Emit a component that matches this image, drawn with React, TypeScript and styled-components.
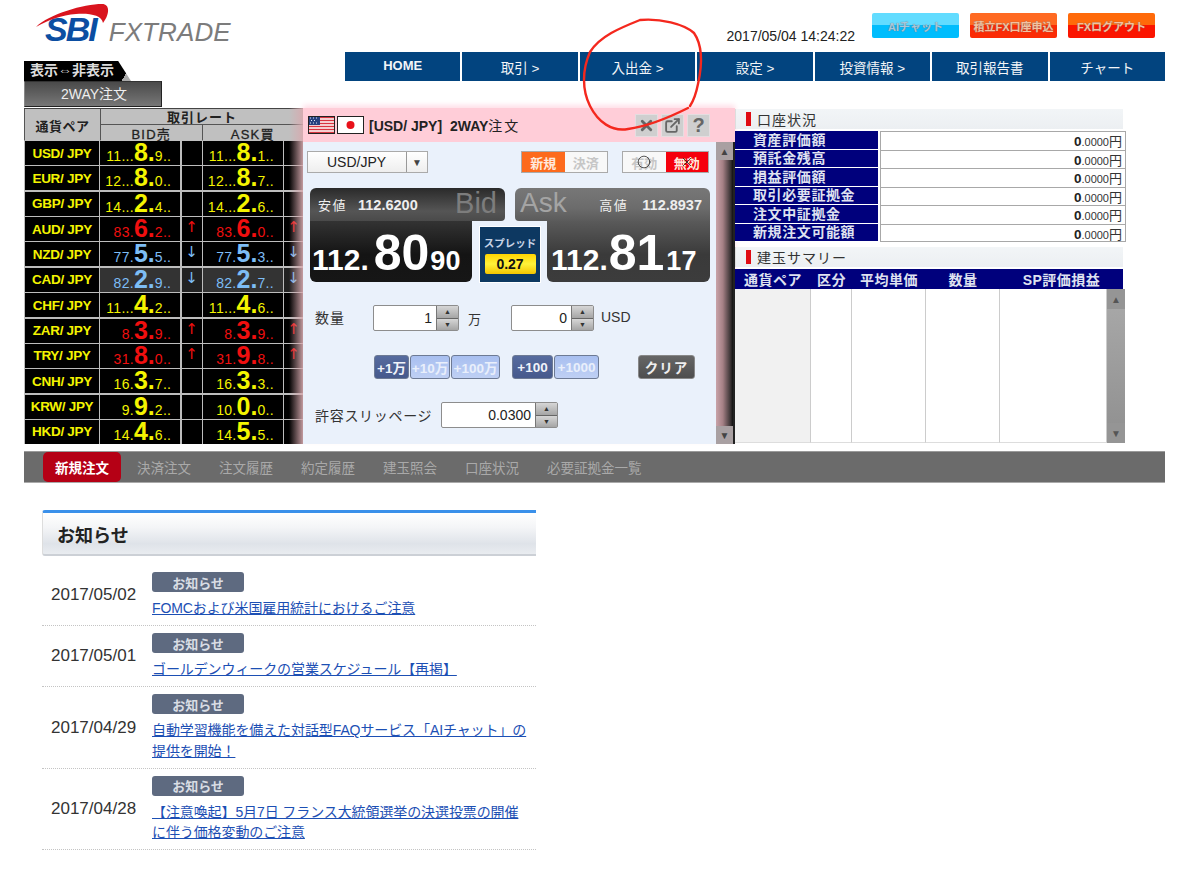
import { FC, Fragment } from "react";
import styled, { createGlobalStyle } from "styled-components";
import { Circle, ExternalLink, X } from "lucide-react";

const GlobalStyle = createGlobalStyle`
    html, body {
        margin:0;
        padding:0;
        background:#fff;
    }
    body {
        font-family:"Liberation Sans", "Noto Sans CJK JP", sans-serif;
        color:#222;
    }
    * {
        box-sizing:border-box;
    }
`

const Page = styled.div`
    position:relative;
    width:1200px;
    height:878px;
    padding:0 35px 0 24px;
    overflow:hidden;
`

/* ---------- header ---------- */

const TopBar = styled.div`
    display:flex;
    height:52px;
`

const Logo = styled.div`
    position:relative;
    display:flex;
    align-items:baseline;
    margin-left:21px;
    padding-top:11px;
    height:52px;
`

const Swoosh = styled.svg`
    position:absolute;
    left:-11px;
    top:0;
`

const LogoMark = styled.span`
    font-size:34px;
    line-height:36px;
    font-weight:bold;
    font-style:italic;
    letter-spacing:-2px;
    color:#0b4ea2;
`

const LogoName = styled.span`
    margin-left:13px;
    font-size:26px;
    font-style:italic;
    letter-spacing:0.1px;
    color:#7c7c7c;
`

const TopRight = styled.div`
    display:flex;
    align-items:flex-start;
    margin-left:auto;
    margin-right:10px;
    padding-top:13px;
`

const Clock = styled.div`
    font-size:14px;
    line-height:16px;
    margin:15px 6px 0 0;
    color:#222;
`

interface TopButtonProps {
    $tone:"cyan" | "orange" | "red";
}
const topTones = {
    cyan:"linear-gradient(#62dcff 0 50%, #00bdfd 50%)",
    orange:"linear-gradient(#ff6a22 0 50%, #fb2b05 50%)",
    red:"linear-gradient(#ff6a0a 0 50%, #fb1500 50%)",
};
const TopButton = styled.div<TopButtonProps>`
    width:87px;
    height:25px;
    margin-left:11px;
    display:flex;
    align-items:center;
    justify-content:center;
    border-radius:2px;
    font-size:11px;
    font-weight:bold;
    white-space:nowrap;
    color:${(props)=>props.$tone==="cyan" ? "#a9c7dc" : "#f4c1a0"};
    text-shadow:0 0 1px #666;
    background:${(props)=>topTones[props.$tone]};
`

const NavRow = styled.div`
    display:flex;
    justify-content:space-between;
    height:56px;
`

const LeftTabs = styled.div`
    display:flex;
    flex-direction:column;
    padding-top:9px;
`

const ToggleTab = styled.div`
    width:107px;
    height:20px;
    padding-left:6px;
    font-size:14px;
    line-height:19px;
    font-weight:bold;
    color:#ddd;
    white-space:nowrap;
    background:linear-gradient(120deg, #000 0 92%, #aaa 92%);
    clip-path:polygon(0 0, 88% 0, 100% 100%, 0 100%);
`

const WayTab = styled.div`
    width:138px;
    height:26px;
    font-size:14px;
    line-height:25px;
    padding-left:36px;
    color:#eee;
    background:linear-gradient(#4a4a4a, #777);
    border:1px solid #222;
    border-left-color:#888;
    border-top-color:#333;
`

const Nav = styled.div`
    display:flex;
    gap:2px;
    width:820px;
    height:29px;
`

const NavItem = styled.div`
    flex:1;
    display:flex;
    align-items:center;
    justify-content:center;
    padding-top:1px;
    font-size:13.5px;
    color:#f2f5f8;
    background:#02447f;
`

const HomeItem = styled(NavItem)`
    font-size:13px;
    font-weight:bold;
    padding-bottom:3px;
`

const Scribble = styled.svg`
    position:absolute;
    left:0;
    top:0;
    pointer-events:none;
`

/* ---------- rate table ---------- */

const Main = styled.div`
    display:flex;
    height:336px;
`

const RateColumn = styled.div`
    position:relative;
    width:279px;
    flex:none;
    display:flex;
    flex-direction:column;
`

const RateHead = styled.div`
    display:grid;
    grid-template-columns:75px 1fr 1fr;
    grid-template-rows:15px 16px;
    height:33px;
    flex:none;
    gap:1px;
    background:#555;
    border-top:1px solid #444;
    border-bottom:1px solid #999;
    padding-left:1px;
`

const HeadCell = styled.div`
    display:flex;
    align-items:center;
    justify-content:center;
    background:#c0c0c0;
    color:#222;
    font-weight:bold;
    font-size:13px;
    letter-spacing:0.5px;
    white-space:nowrap;
`

const PairHead = styled(HeadCell)`
    grid-row:1 / span 2;
`

const RateTitle = styled(HeadCell)`
    grid-column:2 / span 2;
    letter-spacing:1px;
`

const SideHead = styled(HeadCell)`
    font-weight:normal;
    -webkit-text-stroke:0.3px #222;
    letter-spacing:1.2px;
`

const RateBody = styled.div`
    flex:1;
    min-height:0;
    display:grid;
    grid-template-columns:74px 80px 20px 80px 1fr;
    grid-template-rows:repeat(12, minmax(0, 1fr));
    gap:1.3px;
    background:#bdbdbd;
    padding-left:1px;
`

const PairCell = styled.div`
    display:flex;
    align-items:center;
    justify-content:center;
    background:#000;
    color:#f4f400;
    font-weight:bold;
    font-size:13.5px;
    letter-spacing:-0.3px;
    white-space:pre;
`

const rateColors = {
    yellow:"#f4f400",
    red:"#f00f0f",
    blue:"#7dbdf5",
};
type RateTone = keyof typeof rateColors;

interface PriceCellProps {
    $tone:RateTone;
    $lit?:boolean;
}
const PriceCell = styled.div<PriceCellProps>`
    display:flex;
    align-items:baseline;
    justify-content:flex-end;
    padding-right:9px;
    line-height:23px;
    color:${(props)=>rateColors[props.$tone]};
    background:${(props)=>props.$lit ? "#333" : "#000"};
`

const SmallDigit = styled.span`
    font-size:14px;
    letter-spacing:0.3px;
`

const BigDigit = styled.span`
    font-size:25px;
    font-weight:bold;
`

const ArrowCell = styled.div<PriceCellProps>`
    display:flex;
    justify-content:center;
    font-family:"DejaVu Sans", sans-serif;
    font-size:15px;
    line-height:20px;
    color:${(props)=>rateColors[props.$tone]};
    background:${(props)=>props.$lit ? "#222" : "#000"};
`

const RateShade = styled.div`
    position:absolute;
    right:0;
    top:0;
    bottom:0;
    width:14px;
    background:linear-gradient(90deg, rgba(60,40,40,0), rgba(215,170,175,0.9));
`

/* ---------- order dialog ---------- */

const Dialog = styled.div`
    width:432px;
    flex:none;
    display:flex;
    flex-direction:column;
    background:#eaf1fb;
    box-shadow:0 -3px 5px #ffdfe8;
`

const DialogTitle = styled.div`
    height:34px;
    flex:none;
    display:flex;
    align-items:center;
    padding:0 25px 0 5px;
    background:#ffcdd8;
`

const Flag = styled.svg`
    margin-right:2px;
`

const TitleText = styled.div`
    margin-left:3px;
    font-size:14px;
    font-weight:bold;
    color:#222;
    white-space:pre;
`

const TitleLight = styled.span`
    font-weight:normal;
    letter-spacing:2px;
`

const TitleIcons = styled.div`
    display:flex;
    gap:3px;
    margin-left:auto;
`

const TitleIcon = styled.div`
    width:23px;
    height:23px;
    display:flex;
    align-items:center;
    justify-content:center;
    font-size:20px;
    font-weight:bold;
    color:#666;
    background:#cfcfcf;
    border:1px solid #e5dde0;
`

const DialogBody = styled.div`
    flex:1;
    display:flex;
    min-height:0;
`

const DialogContent = styled.div`
    flex:1;
    padding:9px 0 0 4px;
`

const ScrollTrack = styled.div`
    width:19px;
    flex:none;
    display:flex;
    flex-direction:column;
    justify-content:space-between;
    background:linear-gradient(90deg, #c9a3a9, #a58085 40%, #3b3435 85%, #111);
    border-right:2px solid #222;
`

const ScrollEnd = styled.div`
    height:18px;
    display:flex;
    align-items:center;
    justify-content:center;
    font-size:10px;
    color:#444;
    background:#a9a0a2;
`

const ControlRow = styled.div`
    display:flex;
    align-items:stretch;
    height:22px;
`

const Select = styled.div`
    display:flex;
    width:121px;
    border:1px solid #aaa;
    background:linear-gradient(#fff, #eee);
    font-size:14px;
    color:#222;
`

const SelectValue = styled.div`
    flex:1;
    display:flex;
    align-items:center;
    justify-content:center;
    padding-right:1px;
`

const SelectArrow = styled.div`
    width:21px;
    display:flex;
    align-items:center;
    justify-content:center;
    border-left:1px solid #999;
    font-size:10px;
    color:#444;
`

const Segment = styled.div`
    display:flex;
    border:1px solid #aaa;
    margin-left:93px;
    width:87px;
`

const SecondSegment = styled(Segment)`
    margin-left:14px;
`

interface SegmentItemProps {
    $on?:"orange" | "red";
}
const SegmentItem = styled.div<SegmentItemProps>`
    position:relative;
    flex:1;
    display:flex;
    align-items:center;
    justify-content:center;
    font-size:13px;
    font-weight:bold;
    color:${(props)=>props.$on ? "#ffe9dd" : "#c6c6c6"};
    background:${(props)=>props.$on==="orange" ? "#fd6a1c" : props.$on==="red" ? "#f5000c" : "#f8f8f8"};
`

const SegmentMark = styled.span`
    position:absolute;
    left:50%;
    top:50%;
    display:flex;
    transform:translate(-50%, -50%);
    color:#222;
`

const Prices = styled.div`
    position:relative;
    display:flex;
    justify-content:space-between;
    width:400px;
    height:94px;
    margin:15px 0 0 3px;
`

const PriceSide = styled.div`
    display:flex;
    flex-direction:column;
    width:195px;
`

const AskSide = styled(PriceSide)`
    align-items:flex-end;
`

const BidTop = styled.div`
    width:195px;
    height:33px;
    display:flex;
    align-items:flex-start;
    padding:10px 8px 0 8px;
    color:#eee;
    font-size:13px;
    border-radius:6px 6px 4px 0;
    background:linear-gradient(#2a2a2a, #555 70%, #4a4a4a);
`

const AskTop = styled(BidTop)`
    border-radius:6px 6px 0 4px;
    padding-left:5px;
    background:linear-gradient(#777, #6c6c6c 60%, #5b5b5b);
`

const HighLow = styled.span`
    font-size:14.5px;
    line-height:15px;
    font-weight:bold;
    margin-left:11px;
    white-space:nowrap;
`

const AskHigh = styled(HighLow)`
    margin-left:14px;
`

const HighLowLabel = styled.span`
    letter-spacing:1.5px;
    line-height:15px;
    white-space:nowrap;
`

const Watermark = styled.span`
    margin:-7px 0 0 auto;
    font-size:29px;
    line-height:24px;
    color:#7d7d7d;
`

const AskMark = styled(Watermark)`
    margin:-7px auto 0 0;
    font-size:28px;
    color:#a4a4a4;
`

const BidBottom = styled.div`
    width:162px;
    height:61px;
    display:flex;
    align-items:baseline;
    padding:3px 0 0 2px;
    line-height:58px;
    color:#fff;
    font-weight:bold;
    border-radius:0 0 6px 6px;
    background:linear-gradient(#333, #141414 55%, #161616);
    white-space:nowrap;
`

const AskBottom = styled(BidBottom)`
    width:163px;
    padding-left:4px;
    background:linear-gradient(#5a5a5a, #3a3a3a 55%, #3c3c3c);
`

const PriceMid = styled.span`
    font-size:30px;
`

const PriceLarge = styled.span`
    font-size:50px;
    margin-left:5px;
`

const AskLarge = styled(PriceLarge)`
    margin-left:1px;
`

const PriceTail = styled.span`
    font-size:27px;
    margin-left:1px;
`

const AskTail = styled(PriceTail)`
    margin-left:2px;
`

const SpreadBox = styled.div`
    position:absolute;
    left:170px;
    top:39px;
    width:60px;
    height:55px;
    display:flex;
    flex-direction:column;
    align-items:center;
    padding-top:8px;
    background:#0d3861;
    box-shadow:0 0 0 1px #fff;
    font-size:10.5px;
    font-weight:bold;
    color:#c8d4e6;
`

const SpreadValue = styled.div`
    width:51px;
    height:20px;
    margin-top:4px;
    display:flex;
    align-items:center;
    justify-content:center;
    border-radius:2px;
    font-size:14px;
    color:#111;
    background:linear-gradient(#ffd400, #fff23a 50%, #f5c400);
`

interface FieldRowProps {
    $top:number;
}
const FieldRow = styled.div<FieldRowProps>`
    display:flex;
    align-items:center;
    height:26px;
    margin-top:${(props)=>props.$top}px;
`

const FieldLabel = styled.div`
    width:58px;
    margin-left:8px;
    padding-bottom:3px;
    font-size:14px;
    letter-spacing:1px;
    color:#333;
`

const SlipLabel = styled(FieldLabel)`
    width:126px;
    padding-bottom:1px;
    letter-spacing:0.7px;
    white-space:nowrap;
`

interface SpinProps {
    $width:number;
}
const Spin = styled.div<SpinProps>`
    width:${(props)=>props.$width}px;
    height:26px;
    display:flex;
    border:1px solid #8d8d8d;
    border-radius:2px;
    background:#fff;
`

const SpinValue = styled.div`
    flex:1;
    display:flex;
    align-items:center;
    justify-content:flex-end;
    padding-right:4px;
    font-size:14px;
    color:#222;
`

const SpinButtons = styled.div`
    width:22px;
    display:flex;
    flex-direction:column;
    gap:1px;
    background:#666;
    border-left:1px solid #777;
`

const SpinButton = styled.div`
    flex:1;
    display:flex;
    align-items:center;
    justify-content:center;
    font-size:7px;
    color:#333;
    background:linear-gradient(#d6d6d6, #a5a5a5);
`

const Unit = styled.div`
    margin-left:9px;
    width:43px;
    font-size:13px;
    color:#333;
`

const UsdUnit = styled(Unit)`
    font-size:14px;
    margin-left:7px;
    padding-bottom:3px;
`

const QuickRow = styled.div`
    display:flex;
    align-items:center;
    height:24px;
    margin:24px 0 0 67px;
`

const QuickGroup = styled.div`
    display:flex;
    gap:1px;
    margin-right:12px;
`

interface QuickProps {
    $dark?:boolean;
    $width:number;
}
const QuickButton = styled.div<QuickProps>`
    width:${(props)=>props.$width}px;
    height:24px;
    display:flex;
    align-items:center;
    justify-content:center;
    border:1px solid #6d7a94;
    border-radius:3px;
    font-size:13.5px;
    font-weight:bold;
    white-space:nowrap;
    color:${(props)=>props.$dark ? "#f0f3fa" : "#e9effb"};
    background:${(props)=>props.$dark ? "linear-gradient(#566b9e, #46598c)" : "linear-gradient(#a8bff0, #bfd0f4)"};
`

const ClearButton = styled.div`
    width:57px;
    height:24px;
    margin-left:27px;
    display:flex;
    align-items:center;
    justify-content:center;
    border-radius:3px;
    font-size:13.5px;
    font-weight:bold;
    letter-spacing:1px;
    color:#eee;
    background:linear-gradient(#666, #4e4e4e);
    border:1px solid #888;
`

/* ---------- right panel ---------- */

const SidePanel = styled.div`
    width:391px;
    flex:none;
    display:flex;
    flex-direction:column;
    padding-top:1px;
`

const SectionHead = styled.div`
    width:388px;
    height:20px;
    display:flex;
    align-items:center;
    padding-left:10px;
    font-size:14px;
    letter-spacing:1px;
    color:#333;
    background:linear-gradient(#f2f5f7, #eceff2);
    border-left:1px solid #ddd;
`

const RedMark = styled.span`
    width:5px;
    height:14px;
    margin-right:6px;
    background:#e00c14;
`

const AccountRows = styled.div`
    display:grid;
    grid-template-columns:143px 246px;
    grid-auto-rows:18.5px;
    column-gap:2px;
    margin:2px 0 5px;
`

const AccountLabel = styled.div`
    display:flex;
    align-items:center;
    padding:0 0 2px 18px;
    font-size:14px;
    font-weight:bold;
    letter-spacing:0.6px;
    color:#dfe2f0;
    white-space:nowrap;
    background:#00007c;
    border-bottom:1px solid #fff;
`

const AccountValue = styled.div`
    display:flex;
    align-items:baseline;
    justify-content:flex-end;
    padding-right:3px;
    border:1px solid #a8a8a8;
    border-bottom:none;
    line-height:19px;
    font-size:13px;
    color:#333;
`

const LastValue = styled(AccountValue)`
    border-bottom:1px solid #a8a8a8;
`

const ValueMain = styled.span`
    font-weight:bold;
    font-size:13.5px;
    color:#222;
`

const ValueSub = styled.span`
    font-size:11px;
`

const SummaryHead = styled.div`
    display:grid;
    grid-template-columns:76px 41px 74px 74px 123px;
    width:388px;
    height:20px;
    margin-top:2px;
    background:#00007c;
`

const SummaryTitle = styled.div`
    display:flex;
    align-items:center;
    justify-content:center;
    font-size:14px;
    font-weight:bold;
    color:#dfe2f0;
    white-space:nowrap;
    letter-spacing:0.5px;
`

const SummaryBody = styled.div`
    width:390px;
    height:154px;
    display:flex;
`

const SummaryCell = styled.div<SpinProps>`
    width:${(props)=>props.$width}px;
    border-right:1px solid #ccc;
    border-bottom:1px solid #ddd;
    background:#fff;
`

const SummaryFirst = styled(SummaryCell)`
    background:#f1f1f1;
`

const SummaryScroll = styled.div`
    width:18px;
    display:flex;
    flex-direction:column;
    justify-content:space-between;
    background:linear-gradient(#aaa, #8f8f8f);
`

const SummaryArrow = styled.div`
    height:20px;
    display:flex;
    align-items:center;
    justify-content:center;
    font-size:10px;
    color:#555;
    background:#959595;
`

/* ---------- tabs and notices ---------- */

const TabBar = styled.div`
    display:flex;
    align-items:stretch;
    height:32px;
    margin-top:7px;
    padding-left:19px;
    background:#6b6b6b;
    border-top:1px solid #9a9a9a;
    border-bottom:1px solid #aaa;
`

interface TabProps {
    $active?:boolean;
}
const Tab = styled.div<TabProps>`
    display:flex;
    align-items:center;
    padding:0 ${(props)=>props.$active ? 12 : 14}px;
    margin-right:${(props)=>props.$active ? 2 : 0}px;
    font-size:13.5px;
    white-space:nowrap;
    color:${(props)=>props.$active ? "#fff" : "#a9a9a9"};
    font-weight:${(props)=>props.$active ? "bold" : "normal"};
    background:${(props)=>props.$active ? "#b50015" : "none"};
    border-radius:${(props)=>props.$active ? "5px" : "0"};
`

const Notices = styled.div`
    width:494px;
    margin:27px 0 0 18px;
`

const NoticeHead = styled.div`
    height:46px;
    display:flex;
    align-items:center;
    padding-left:14px;
    font-size:18px;
    font-weight:bold;
    color:#222;
    border-top:3px solid #3a90ea;
    border-bottom:2px solid #ccd0d6;
    border-left:1px solid #ddd;
    border-radius:3px 0 0 3px;
    background:linear-gradient(#fff, #f4f5f7 35%, #dfe3e9 75%, #e9ecf0);
    margin-bottom:9px;
`

const NoticeRow = styled.div`
    display:flex;
    align-items:center;
    padding:7px 0 6.5px 9px;
    border-bottom:1px dotted #c4c4c4;
`

const NoticeDate = styled.div`
    width:101px;
    flex:none;
    font-size:17px;
    color:#333;
`

const NoticeMain = styled.div`
    width:380px;
`

const NoticeBadge = styled.div`
    width:92px;
    height:20px;
    display:flex;
    align-items:center;
    justify-content:center;
    border-radius:3px;
    font-size:13px;
    font-weight:bold;
    color:#d9dde4;
    background:#5e6a80;
    margin-bottom:6px;
`

const NoticeLink = styled.a`
    display:block;
    font-size:14px;
    line-height:20.5px;
    letter-spacing:-0.1px;
    color:#1c4fb4;
    text-decoration:underline;
`

interface RateRow {
    pair:string;
    tone:RateTone;
    bid:[string, string, string];
    ask:[string, string, string];
    arrow?:string;
    lit?:boolean;
}

const rates:RateRow[] = [
    {pair:"USD/ JPY", tone:"yellow", bid:["11...","8.","9.."], ask:["11...","8.","1.."]},
    {pair:"EUR/ JPY", tone:"yellow", bid:["12...","8.","0.."], ask:["12...","8.","7.."]},
    {pair:"GBP/ JPY", tone:"yellow", bid:["14...","2.","4.."], ask:["14...","2.","6.."]},
    {pair:"AUD/ JPY", tone:"red", bid:["83.","6.","2.."], ask:["83.","6.","0.."], arrow:"↑"},
    {pair:"NZD/ JPY", tone:"blue", bid:["77.","5.","5.."], ask:["77.","5.","3.."], arrow:"↓"},
    {pair:"CAD/ JPY", tone:"blue", bid:["82.","2.","9.."], ask:["82.","2.","7.."], arrow:"↓", lit:true},
    {pair:"CHF/ JPY", tone:"yellow", bid:["11...","4.","2.."], ask:["11...","4.","6.."]},
    {pair:"ZAR/ JPY", tone:"red", bid:["8.","3.","9.."], ask:["8.","3.","9.."], arrow:"↑"},
    {pair:"TRY/ JPY", tone:"red", bid:["31.","8.","0.."], ask:["31.","9.","8.."], arrow:"↑"},
    {pair:"CNH/ JPY", tone:"yellow", bid:["16.","3.","7.."], ask:["16.","3.","3.."]},
    {pair:"KRW/ JPY", tone:"yellow", bid:["9.","9.","2.."], ask:["10.","0.","0.."]},
    {pair:"HKD/ JPY", tone:"yellow", bid:["14.","4.","6.."], ask:["14.","5.","5.."]},
];

const accountLabels = ["資産評価額","預託金残高","損益評価額","取引必要証拠金","注文中証拠金","新規注文可能額"];

const tabs = ["決済注文","注文履歴","約定履歴","建玉照会","口座状況","必要証拠金一覧"];

const notices = [
    {date:"2017/05/02", title:"FOMCおよび米国雇用統計におけるご注意"},
    {date:"2017/05/01", title:"ゴールデンウィークの営業スケジュール【再掲】"},
    {date:"2017/04/29", title:"自動学習機能を備えた対話型FAQサービス「AIチャット」の提供を開始！"},
    {date:"2017/04/28", title:"【注意喚起】5月7日 フランス大統領選挙の決選投票の開催に伴う価格変動のご注意"},
];

const UsFlag:FC = ()=>(
    <Flag width="27" height="18" viewBox="0 0 27 18">
        <rect width="27" height="18" fill="#fff"/>
        <path d="M0 1.5h27M0 4.5h27M0 7.5h27M0 10.5h27M0 13.5h27M0 16.5h27" stroke="#d8343f" strokeWidth="1.5"/>
        <rect width="12" height="9" fill="#27417f"/>
        <path d="M2 2h1M5 2h1M8 2h1M3 4.5h1M6 4.5h1M2 7h1M5 7h1M8 7h1" stroke="#dfe6f5" strokeWidth="1"/>
        <rect x="0.5" y="0.5" width="26" height="17" fill="none" stroke="#222"/>
    </Flag>
);

const JpFlag:FC = ()=>(
    <Flag width="27" height="18" viewBox="0 0 27 18">
        <rect x="0.5" y="0.5" width="26" height="17" fill="#fff" stroke="#222"/>
        <circle cx="13.5" cy="9" r="4" fill="#e8111a"/>
    </Flag>
);

const Cell:FC<{parts:[string, string, string]}> = ({parts})=>(
    <>
        <SmallDigit>{parts[0]}</SmallDigit>
        <BigDigit>{parts[1]}</BigDigit>
        <SmallDigit>{parts[2]}</SmallDigit>
    </>
);

const SpinBox:FC<{width:number; value:string}> = ({width,value})=>(
    <Spin $width={width}>
        <SpinValue>{value}</SpinValue>
        <SpinButtons>
            <SpinButton>▲</SpinButton>
            <SpinButton>▼</SpinButton>
        </SpinButtons>
    </Spin>
);

const App:FC = ()=>{
    return (
        <Page>
            <GlobalStyle/>
            <TopBar>
                <Logo>
                    <Swoosh width="100" height="32" viewBox="0 0 100 32">
                        <path d="M2 27 C15 14 50 4 68 4 C76 4 76 14 69 23 C68 15 55 13 42 14 C28 15 14 20 2 27Z" fill="#d9141e"/>
                    </Swoosh>
                    <LogoMark>SBI</LogoMark>
                    <LogoName>FXTRADE</LogoName>
                </Logo>
                <TopRight>
                    <Clock>2017/05/04 14:24:22</Clock>
                    <TopButton $tone="cyan">AIチャット</TopButton>
                    <TopButton $tone="orange">積立FX口座申込</TopButton>
                    <TopButton $tone="red">FXログアウト</TopButton>
                </TopRight>
            </TopBar>

            <NavRow>
                <LeftTabs>
                    <ToggleTab>表示⇔非表示</ToggleTab>
                    <WayTab>2WAY注文</WayTab>
                </LeftTabs>
                <Nav>
                    <HomeItem>HOME</HomeItem>
                    <NavItem>取引 &gt;</NavItem>
                    <NavItem>入出金 &gt;</NavItem>
                    <NavItem>設定 &gt;</NavItem>
                    <NavItem>投資情報 &gt;</NavItem>
                    <NavItem>取引報告書</NavItem>
                    <NavItem>チャート</NavItem>
                </Nav>
            </NavRow>

            <Main>
                <RateColumn>
                    <RateHead>
                        <PairHead>通貨ペア</PairHead>
                        <RateTitle>取引レート</RateTitle>
                        <SideHead>BID売</SideHead>
                        <SideHead>ASK買</SideHead>
                    </RateHead>
                    <RateBody>
                        {rates.map((row)=>(
                            <Fragment key={row.pair}>
                                <PairCell>{row.pair}</PairCell>
                                <PriceCell $tone={row.tone} $lit={row.lit}><Cell parts={row.bid}/></PriceCell>
                                <ArrowCell $tone={row.tone} $lit={row.lit}>{row.arrow}</ArrowCell>
                                <PriceCell $tone={row.tone} $lit={row.lit}><Cell parts={row.ask}/></PriceCell>
                                <ArrowCell $tone={row.tone} $lit={row.lit}>{row.arrow}</ArrowCell>
                            </Fragment>
                        ))}
                    </RateBody>
                    <RateShade/>
                </RateColumn>

                <Dialog>
                    <DialogTitle>
                        <UsFlag/>
                        <JpFlag/>
                        <TitleText>[USD/ JPY]  2WAY<TitleLight>注文</TitleLight></TitleText>
                        <TitleIcons>
                            <TitleIcon><X size={17} strokeWidth={4}/></TitleIcon>
                            <TitleIcon><ExternalLink size={17} strokeWidth={2.6}/></TitleIcon>
                            <TitleIcon>?</TitleIcon>
                        </TitleIcons>
                    </DialogTitle>
                    <DialogBody>
                        <DialogContent>
                            <ControlRow>
                                <Select>
                                    <SelectValue>USD/JPY</SelectValue>
                                    <SelectArrow>▼</SelectArrow>
                                </Select>
                                <Segment>
                                    <SegmentItem $on="orange">新規</SegmentItem>
                                    <SegmentItem>決済</SegmentItem>
                                </Segment>
                                <SecondSegment>
                                    <SegmentItem>有効<SegmentMark><Circle size={14} strokeWidth={1.3}/></SegmentMark></SegmentItem>
                                    <SegmentItem $on="red">無効<SegmentMark><X size={15} strokeWidth={1.3}/></SegmentMark></SegmentItem>
                                </SecondSegment>
                            </ControlRow>

                            <Prices>
                                <PriceSide>
                                    <BidTop>
                                        <HighLowLabel>安値</HighLowLabel>
                                        <HighLow>112.6200</HighLow>
                                        <Watermark>Bid</Watermark>
                                    </BidTop>
                                    <BidBottom>
                                        <PriceMid>112.</PriceMid>
                                        <PriceLarge>80</PriceLarge>
                                        <PriceTail>90</PriceTail>
                                    </BidBottom>
                                </PriceSide>
                                <AskSide>
                                    <AskTop>
                                        <AskMark>Ask</AskMark>
                                        <HighLowLabel>高値</HighLowLabel>
                                        <AskHigh>112.8937</AskHigh>
                                    </AskTop>
                                    <AskBottom>
                                        <PriceMid>112.</PriceMid>
                                        <AskLarge>81</AskLarge>
                                        <AskTail>17</AskTail>
                                    </AskBottom>
                                </AskSide>
                                <SpreadBox>
                                    スプレッド
                                    <SpreadValue>0.27</SpreadValue>
                                </SpreadBox>
                            </Prices>

                            <FieldRow $top={23}>
                                <FieldLabel>数量</FieldLabel>
                                <SpinBox width={86} value="1"/>
                                <Unit>万</Unit>
                                <SpinBox width={83} value="0"/>
                                <UsdUnit>USD</UsdUnit>
                            </FieldRow>

                            <QuickRow>
                                <QuickGroup>
                                    <QuickButton $dark $width={35}>+1万</QuickButton>
                                    <QuickButton $width={40}>+10万</QuickButton>
                                    <QuickButton $width={49}>+100万</QuickButton>
                                </QuickGroup>
                                <QuickGroup>
                                    <QuickButton $dark $width={41}>+100</QuickButton>
                                    <QuickButton $width={45}>+1000</QuickButton>
                                </QuickGroup>
                                <ClearButton>クリア</ClearButton>
                            </QuickRow>

                            <FieldRow $top={23}>
                                <SlipLabel>許容スリッページ</SlipLabel>
                                <SpinBox width={117} value="0.0300"/>
                            </FieldRow>
                        </DialogContent>
                        <ScrollTrack>
                            <ScrollEnd>▲</ScrollEnd>
                            <ScrollEnd>▼</ScrollEnd>
                        </ScrollTrack>
                    </DialogBody>
                </Dialog>

                <SidePanel>
                    <SectionHead><RedMark/>口座状況</SectionHead>
                    <AccountRows>
                        {accountLabels.map((label,i)=>{
                            const Value = i===accountLabels.length-1 ? LastValue : AccountValue;
                            return (
                                <Fragment key={label}>
                                    <AccountLabel>{label}</AccountLabel>
                                    <Value>
                                        <ValueMain>0</ValueMain>
                                        <ValueSub>.0000</ValueSub>円
                                    </Value>
                                </Fragment>
                            );
                        })}
                    </AccountRows>
                    <SectionHead><RedMark/>建玉サマリー</SectionHead>
                    <SummaryHead>
                        <SummaryTitle>通貨ペア</SummaryTitle>
                        <SummaryTitle>区分</SummaryTitle>
                        <SummaryTitle>平均単価</SummaryTitle>
                        <SummaryTitle>数量</SummaryTitle>
                        <SummaryTitle>SP評価損益</SummaryTitle>
                    </SummaryHead>
                    <SummaryBody>
                        <SummaryFirst $width={76}/>
                        <SummaryCell $width={41}/>
                        <SummaryCell $width={74}/>
                        <SummaryCell $width={74}/>
                        <SummaryCell $width={107}/>
                        <SummaryScroll>
                            <SummaryArrow>▲</SummaryArrow>
                            <SummaryArrow>▼</SummaryArrow>
                        </SummaryScroll>
                    </SummaryBody>
                </SidePanel>
            </Main>

            <TabBar>
                <Tab $active>新規注文</Tab>
                {tabs.map((tab)=>(
                    <Tab key={tab}>{tab}</Tab>
                ))}
            </TabBar>

            <Notices>
                <NoticeHead>お知らせ</NoticeHead>
                {notices.map((notice)=>(
                    <NoticeRow key={notice.date}>
                        <NoticeDate>{notice.date}</NoticeDate>
                        <NoticeMain>
                            <NoticeBadge>お知らせ</NoticeBadge>
                            <NoticeLink href="#">{notice.title}</NoticeLink>
                        </NoticeMain>
                    </NoticeRow>
                ))}
            </Notices>

            <Scribble width="1200" height="878" viewBox="0 0 1200 878">
                <path d="M688 108 C672 116 650 126 628 129 C612 132 598 122 590 106 C582 90 582 70 590 52 C600 36 620 28 640 20 C660 18 684 24 694 33 C703 46 702 66 698 84 C696 94 694 100 690 106" fill="none" stroke="#f4281e" strokeWidth="2.4" strokeLinecap="round"/>
            </Scribble>
        </Page>
    )
}
export default App;
